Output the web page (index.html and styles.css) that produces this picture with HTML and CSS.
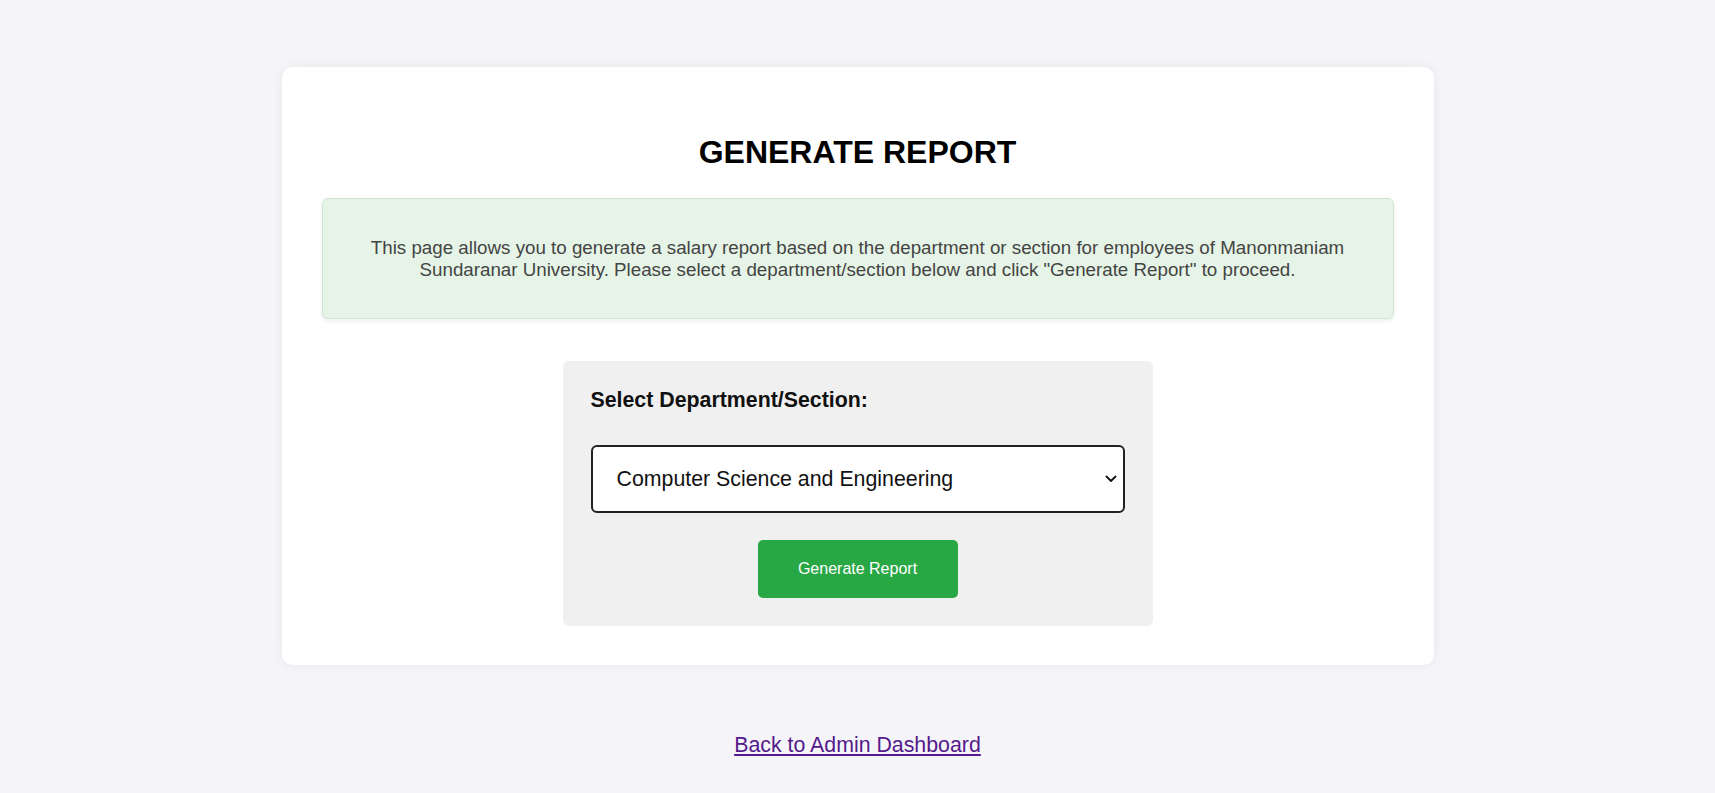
FILE: index.html
```html
<!DOCTYPE html>
<html lang="en">
<head>
<meta charset="utf-8">
<title>Generate Report</title>
<link rel="stylesheet" href="styles.css">
</head>
<body>
  <main class="card">
    <h1 class="title">GENERATE REPORT</h1>
    <div class="info">
      <p>This page allows you to generate a salary report based on the department or section for employees of Manonmaniam Sundaranar University. Please select a department/section below and click "Generate Report" to proceed.</p>
    </div>
    <form class="form-box">
      <label class="label" for="dept">Select Department/Section:</label>
      <div class="select-wrap">
        <select id="dept" class="select">
          <option>Computer Science and Engineering</option>
        </select>
        <svg class="chevron" width="12" height="8" viewBox="0 0 12 8"><path d="M1.5 1.5 L6 6 L10.5 1.5" fill="none" stroke="#111" stroke-width="1.8" stroke-linecap="round" stroke-linejoin="round"/></svg>
      </div>
      <div class="actions">
        <button type="button" class="btn">Generate Report</button>
      </div>
    </form>
  </main>
  <div class="back">
    <a href="#" class="back-link">Back to Admin Dashboard</a>
  </div>
</body>
</html>
```
FILE: styles.css
```css
html, body {
  margin: 0;
  padding: 0;
}
body {
  background: #f4f4f9;
  font-family: "Liberation Sans", Arial, sans-serif;
  color: #000;
  padding-top: 67px;
}
.card {
  width: 1152px;
  box-sizing: border-box;
  margin: 0 auto;
  background: #fff;
  border-radius: 10px;
  box-shadow: 0 0 12px rgba(0, 0, 0, 0.06);
  padding: 40px 40px 39px;
}
.title {
  margin: 27px 0 27px;
  text-align: center;
  font-size: 32px;
  font-weight: bold;
  line-height: 37px;
}
.info {
  background: #e6f4e7;
  border: 1px solid #cfe6d0;
  border-radius: 6px;
  box-shadow: 0 2px 5px rgba(0, 0, 0, 0.07);
  padding: 19px 20px;
  text-align: center;
}
.info p {
  margin: 19px 0;
  font-size: 18.75px;
  line-height: 21.5px;
  color: #444;
}
.form-box {
  width: 590px;
  box-sizing: border-box;
  margin: 42px auto 0;
  background: #f0f0f0;
  border-radius: 6px;
  padding: 27px 28px 28px;
  display: flex;
  flex-direction: column;
}
.label {
  font-size: 21.33px;
  font-weight: bold;
  line-height: 24.5px;
  color: #111;
}
.select-wrap {
  position: relative;
  margin-top: 32px;
}
.select {
  width: 100%;
  height: 68px;
  box-sizing: border-box;
  appearance: none;
  -webkit-appearance: none;
  background: #fff;
  border: 2px solid #222;
  border-radius: 6px;
  padding: 0 40px 0 24px;
  font-family: "Liberation Sans", Arial, sans-serif;
  font-size: 21.33px;
  color: #111;
}
.chevron {
  position: absolute;
  right: 8px;
  top: 30px;
  pointer-events: none;
}
.actions {
  display: flex;
  justify-content: center;
  margin-top: 27px;
}
.btn {
  width: 200px;
  height: 58px;
  background: #28a745;
  color: #fff;
  border: none;
  border-radius: 5px;
  font-family: "Liberation Sans", Arial, sans-serif;
  font-size: 16px;
  cursor: pointer;
}
.back {
  text-align: center;
  margin-top: 68px;
}
.back-link {
  font-size: 21.33px;
  line-height: 24.5px;
  color: #551a8b;
}
```
